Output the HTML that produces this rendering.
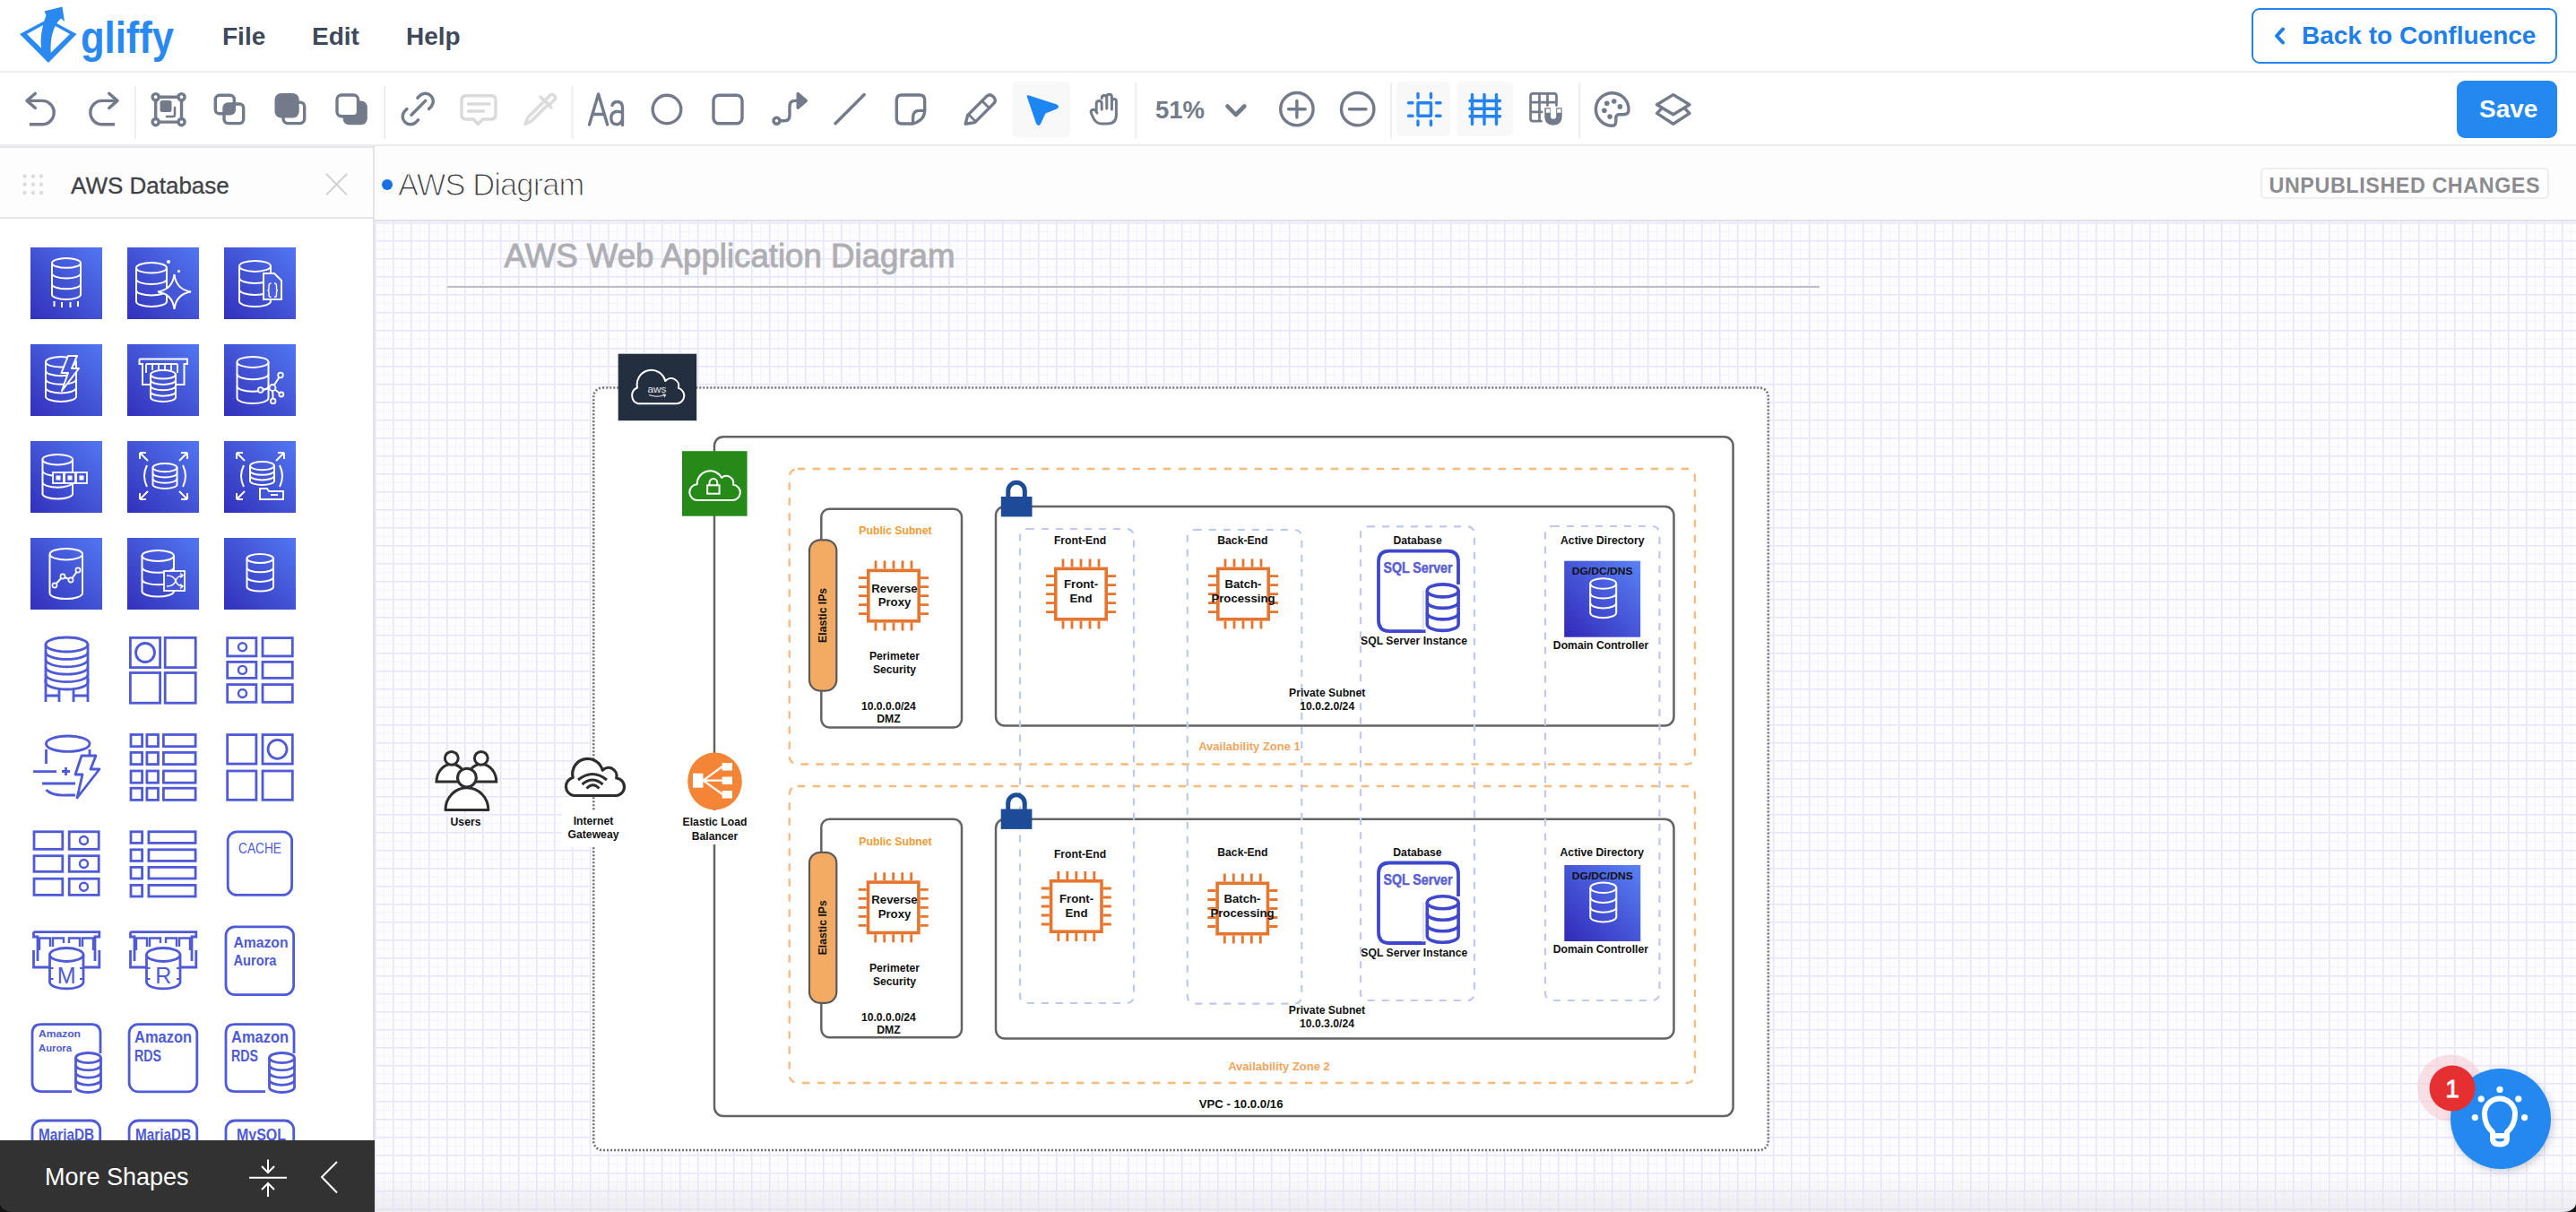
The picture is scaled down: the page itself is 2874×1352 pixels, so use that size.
<!DOCTYPE html>
<html><head><meta charset="utf-8">
<style>
*{box-sizing:border-box;margin:0;padding:0}
html,body{width:2874px;height:1352px;overflow:hidden;background:#fff;font-family:"Liberation Sans",sans-serif}
.abs{position:absolute}
#header{position:absolute;left:0;top:0;width:2874px;height:81px;background:#fff;border-bottom:2px solid #EDEDF0}
#toolbar{position:absolute;left:0;top:81px;width:2874px;height:82px;background:#fff;border-bottom:2px solid #EDEDF0}
.menu{position:absolute;font-size:28px;line-height:28px;font-weight:bold;color:#3E4A5B}
#sidebar{position:absolute;left:0;top:163px;width:418px;height:1189px;background:#fff;border-right:2px solid #E4E4E8;overflow:hidden}
#sbhead{position:absolute;left:0;top:0;width:416px;height:81px;border-top:2px solid #E6E6EA;border-bottom:2px solid #E6E6EA;background:#FDFDFE}
#footer{position:absolute;left:0;top:1272px;width:418px;height:80px;background:#323232}
#titlebar{position:absolute;left:418px;top:163px;width:2456px;height:84px;background:#FDFDFE;border-bottom:2px solid #E2E2E6}
#canvas{position:absolute;left:418px;top:247px;width:2456px;height:1105px;overflow:hidden;
 background-color:#FDFDFF;
 background-image:
  linear-gradient(to right,#E7E5FB 1px,#F1F0FD 1px,#F1F0FD 2px,transparent 2px),
  linear-gradient(to bottom,#E7E5FB 1px,#F1F0FD 1px,#F1F0FD 2px,transparent 2px),
  linear-gradient(to right,#F5F4FE 1px,transparent 1px),
  linear-gradient(to bottom,#F5F4FE 1px,transparent 1px);
 background-size:20px 20px,20px 20px,10px 10px,10px 10px;
 background-position:0px 1px,0px 1px,0px 1px,0px 1px}
.lbl{position:absolute;font-weight:bold;color:#000;text-align:center;white-space:nowrap;transform:translateX(-50%)}
svg{overflow:visible}
</style></head><body>
<!--HEADER-->
<div id="header">
 <svg class="abs" style="left:0;top:0" width="210" height="80" viewBox="0 0 210 80">
  <path fill="#2A89F1" fill-rule="evenodd" d="M22,38 L54,21 L85.5,38 L54,70 Z M30,38 L54,24.8 L78,38 L54,61.5 Z"/>
  <path fill="#2A89F1" d="M53,69 C44,60 43,40 51.5,17 L49.5,12.5 L69.5,7.5 L72,24 L68,20.5 C60,28 55,42 57,62 Z"/>
  <text x="90" y="59" font-family="Liberation Sans" font-weight="bold" font-size="50" fill="#2A89F1" textLength="104" lengthAdjust="spacingAndGlyphs">gliffy</text>
 </svg>
 <div class="menu" style="left:248px;top:26.6px">File</div>
 <div class="menu" style="left:348px;top:26.6px">Edit</div>
 <div class="menu" style="left:453px;top:26.6px">Help</div>
 <div class="abs" style="left:2512px;top:9px;width:341px;height:62px;border:2.5px solid #2384EE;border-radius:9px"></div>
 <svg class="abs" style="left:0;top:0" width="2874" height="80" viewBox="0 0 2874 80"><path d="M2547,32.5 L2540,40 L2547,47.5" fill="none" stroke="#1F7FEA" stroke-width="4" stroke-linecap="round" stroke-linejoin="round"/></svg>
 <div class="abs" style="left:2568px;top:25.8px;font-size:28px;line-height:28px;font-weight:bold;color:#1F7FEA;white-space:nowrap">Back to Confluence</div>
</div>
<!--TOOLBAR-->
<div id="toolbar">
 <div class="abs" style="left:1129px;top:10px;width:65px;height:62px;background:#F8F8F9;border-radius:6px"></div>
 <div class="abs" style="left:1558px;top:10px;width:60px;height:61px;background:#F8F8F9;border-radius:6px"></div>
 <div class="abs" style="left:1625px;top:10px;width:63px;height:61px;background:#F8F8F9;border-radius:6px"></div>
 <div class="abs" style="left:2741px;top:9px;width:112px;height:64px;background:#2388F0;border-radius:9px"></div>
 <div class="abs" style="left:2766px;top:27px;font-size:28px;line-height:28px;font-weight:bold;color:#fff">Save</div>
 <div class="abs" style="left:1289px;top:27.5px;font-size:27.5px;line-height:27.5px;font-weight:bold;color:#737A8A">51%</div>
</div>
<svg class="abs" style="left:0;top:0" width="2874" height="163" viewBox="0 0 2874 163">
 <g fill="none" stroke="#737A8A" stroke-width="3.4" stroke-linecap="round" stroke-linejoin="round">
  <!-- separators -->
  <g stroke="#EEEEF0" stroke-width="2" stroke-linecap="butt">
   <path d="M151,96 V155 M429,96 V155 M638.7,96 V155 M1267.3,92 V155 M1552,92 V155 M1762,92 V155"/>
  </g>
  <!-- undo -->
  <path d="M39.4,104.3 L30,112.4 L39.4,120.5"/>
  <path d="M30,112.4 H47 A13.2,13.2 0 0 1 47,138.8 H33" stroke-linecap="butt"/>
  <!-- redo -->
  <path d="M121.7,104.3 L131,112.4 L121.7,120.5"/>
  <path d="M131,112.4 H114 A13.2,13.2 0 0 0 114,138.8 H128" stroke-linecap="butt"/>
  <!-- select group -->
  <circle cx="173.7" cy="108.2" r="3.6"/><circle cx="202.5" cy="108.2" r="3.6"/>
  <circle cx="173.7" cy="136.1" r="3.6"/><circle cx="202.5" cy="136.1" r="3.6"/>
  <path d="M177.3,108.2 H198.9 M177.3,136.1 H198.9 M173.7,111.8 V132.5 M202.5,111.8 V132.5"/>
  <rect x="178.5" y="112" width="13" height="13" rx="2.5" fill="#737A8A" stroke="none"/>
  <path d="M195,120 V128 Q195,130 193,130 H186" stroke-width="2.6"/>
  <!-- duplicate -->
  <rect x="240.3" y="106.3" width="21" height="20.5" rx="4.5"/>
  <rect x="250" y="116" width="21.7" height="21.6" rx="4.5"/>
  <rect x="250" y="116" width="11.3" height="10.8" fill="#737A8A" stroke="none"/>
  <!-- bring front -->
  <rect x="316" y="114.1" width="23.7" height="23.5" rx="5"/>
  <rect x="306.5" y="104" width="27.2" height="27.5" rx="7" fill="#737A8A" stroke="none"/>
  <!-- send back -->
  <rect x="382.6" y="112.4" width="27.2" height="26.9" rx="7" fill="#737A8A" stroke="none"/>
  <rect x="376" y="106" width="23.5" height="23.8" rx="5" fill="#fff"/>
  <!-- link -->
  <path d="M459,128.2 L474.7,112.4"/>
  <path d="M465.9,109.2 L468.7,106.4 A8.8,8.8 0 0 1 481.3,118.6 L478.5,121.5"/>
  <path d="M454,121.5 L451.2,124.4 A8.8,8.8 0 0 0 463.8,136.6 L466.6,133.8"/>
  <!-- comment disabled -->
  <g stroke="#DADADC">
   <path d="M520,106.8 H548 Q553,106.8 553,111.8 V128 Q553,133 548,133 H538.5 L533.4,138.5 L528.3,133 H520 Q515,133 515,128 V111.8 Q515,106.8 520,106.8 Z"/>
   <path d="M522.5,116 H546 M522.5,124 H539.5"/>
  </g>
  <!-- eyedropper disabled -->
  <g stroke="#DCDCDE">
   <path d="M586,138.5 L589,131 L608,112 L612,116 L593,135 Z"/>
   <path d="M603,108 L615,120 M608,112 L613.5,106.5 Q616,104 618.5,106.5 Q621,109 618.5,111.5 L612,118"/>
  </g>
  <!-- Aa -->
  <path d="M657.5,139 L667.6,105 L677.7,139 M661.3,127.5 H674"/>
  <path d="M683,117.5 Q684.5,113.5 688.5,113.5 Q694.5,113.5 694.5,120 V139.5 M694.5,126 Q691,124 687.5,124.5 Q681.8,125.5 681.8,131.5 Q681.8,138.7 688,138.7 Q692.5,138.7 694.5,133"/>
  <!-- circle -->
  <circle cx="744" cy="122" r="15.8"/>
  <!-- rect -->
  <rect x="796" y="106.2" width="32" height="31.6" rx="6"/>
  <!-- connector -->
  <circle cx="866.5" cy="134.7" r="3.5"/>
  <path d="M870,134.7 H875 Q881,134.7 881,128.7 V118.4 Q881,112.4 887,112.4 H891"/>
  <path d="M890.2,104.5 L899.3,112.4 L890.2,120.2 Z" fill="#737A8A"/>
  <!-- line -->
  <path d="M932,137.8 L964.2,105.5"/>
  <!-- note -->
  <path d="M1018.4,138 H1006 Q1000.3,138 1000.3,132.3 V111.7 Q1000.3,106 1006,106 H1026 Q1031.7,106 1031.7,111.7 V123.2 Q1031.7,131 1025,135 Q1022,137.5 1018.4,138 Z"/>
  <path d="M1018.6,137.5 V131 Q1018.6,123.4 1026,123.4 H1031.5"/>
  <!-- pencil -->
  <path d="M1077.2,138.2 L1079.6,128.6 L1100.3,107.9 Q1104.3,103.9 1108.3,107.9 Q1112.3,111.9 1108.3,115.9 L1087.6,136.6 Z"/>
  <path d="M1095.6,112.6 L1103.6,120.6 M1080.5,127.5 L1088.5,135.5" stroke-width="2.8"/>
  <!-- pointer -->
  <path d="M1147,107.5 L1178.7,117.8 Q1181,119 1178.5,120.3 L1165.5,125.5 L1160,137.5 Q1158.7,140 1157.3,137.5 Z" fill="#1E86F0" stroke="#1E86F0" stroke-width="2.5"/>
  <!-- hand -->
  <path d="M1223.2,123 V115.5 Q1223.2,112.5 1226.2,112.5 Q1229.2,112.5 1229.2,115.5 V122 M1229.2,109.5 Q1229.2,106.5 1232,106.5 Q1234.8,106.5 1234.8,109.5 V121 M1234.8,108 Q1234.8,105.2 1237.6,105.2 Q1240.4,105.2 1240.4,108 V122 M1240.4,113 Q1240.4,110.5 1242.9,110.5 Q1245.4,110.5 1245.4,113 V128 Q1245.4,138 1235.5,138 H1229 Q1222.5,138 1219.5,131 L1217.5,126.5 Q1216.3,123.5 1218.8,122.5 Q1221.3,121.5 1223.2,124.5 L1224,126" stroke-width="3"/>
  <!-- chevron -->
  <path d="M1369.5,118.5 L1378.8,128 L1388.3,118.5" stroke-width="4.6"/>
  <!-- zoom in/out -->
  <circle cx="1446.9" cy="121.7" r="18.2"/>
  <path d="M1446.9,112.5 V131 M1437.6,121.7 H1456.2"/>
  <circle cx="1514.7" cy="121.7" r="18.2"/>
  <path d="M1505.4,121.7 H1524"/>
  <!-- snap blue -->
  <g stroke="#2384F0">
   <rect x="1582" y="114.8" width="14.5" height="14.5" rx="0.5"/>
   <path d="M1571.5,114.8 H1576 M1602.5,114.8 H1607 M1571.5,129.3 H1576 M1602.5,129.3 H1607 M1582,104.5 V109 M1596.5,104.5 V109 M1582,135 V139.5 M1596.5,135 V139.5"/>
  </g>
  <!-- grid blue -->
  <path stroke="#2384F0" d="M1642.5,105.5 V138.5 M1656,105.5 V138.5 M1669.5,105.5 V138.5 M1640,112.5 H1673.5 M1640,121.2 H1673.5 M1640,129.8 H1673.5"/>
  <!-- grid magnet -->
  <path d="M1719.5,135.2 H1710.2 Q1707.6,135.2 1707.6,132.6 V107 Q1707.6,104.4 1710.2,104.4 H1733.9 Q1736.5,104.4 1736.5,107 V117.6 M1707.6,114.2 H1736.5 M1707.6,124.9 H1720.2 M1717.5,104.4 V135.2 M1726.5,104.4 V117.6" stroke-width="2.7"/>
  <path d="M1723.3,120.2 H1730 V129.5 Q1730,132.8 1733,132.8 Q1736.2,132.8 1736.2,129.5 V120.2 H1742.7 V130 Q1742.7,139.7 1733,139.7 Q1723.3,139.7 1723.3,130 Z" fill="#737A8A" stroke="none"/>
  <rect x="1724.8" y="121.5" width="4.6" height="4.2" fill="#fff" stroke="none"/>
  <rect x="1737.2" y="121.5" width="4.4" height="4.2" fill="#fff" stroke="none"/>
  <!-- palette -->
  <path d="M1799,140.3 A18.3,18.3 0 1 1 1817,123 Q1817,127.5 1811,127.8 H1806.5 Q1802.5,128 1802.8,132.5 Q1803.2,136.5 1802.2,138.5 Q1801,140.3 1799,140.3 Z"/>
  <circle cx="1792.8" cy="115.3" r="2.8" fill="#737A8A" stroke="none"/>
  <circle cx="1800.8" cy="113" r="2.8" fill="#737A8A" stroke="none"/>
  <circle cx="1807.4" cy="118.9" r="2.8" fill="#737A8A" stroke="none"/>
  <circle cx="1789.9" cy="123.3" r="2.8" fill="#737A8A" stroke="none"/>
  <circle cx="1796.1" cy="130.1" r="2.8" fill="#737A8A" stroke="none"/>
  <!-- layers -->
  <path d="M1866.8,105.6 L1885,116.7 L1866.8,127.8 L1848.6,116.7 Z"/>
  <path d="M1854.5,120.4 L1848.6,126.4 L1866.8,138.2 L1885,126.4 L1879.1,120.4"/>
 </g>
</svg>
<!--SIDEBAR-->
<div id="sidebar">
 <div id="sbhead"></div>
 <svg class="abs" style="left:0;top:-163px" width="418" height="1352" viewBox="0 0 418 1352">
  <g fill="#DDDDDF">
   <circle cx="27.6" cy="196.5" r="2.2"/><circle cx="36.9" cy="196.5" r="2.2"/><circle cx="46" cy="196.5" r="2.2"/>
   <circle cx="27.6" cy="205.8" r="2.2"/><circle cx="36.9" cy="205.8" r="2.2"/><circle cx="46" cy="205.8" r="2.2"/>
   <circle cx="27.6" cy="215" r="2.2"/><circle cx="36.9" cy="215" r="2.2"/><circle cx="46" cy="215" r="2.2"/>
  </g>
  <path d="M364,194 L387,217.3 M387,194 L364,217.3" stroke="#CFCFD2" stroke-width="1.8"/>
 </svg>
 <div class="abs" style="left:79px;top:31px;font-size:26px;line-height:26px;color:#404247;-webkit-text-stroke:0.3px #404247;white-space:nowrap">AWS Database</div>
 <div class="abs" style="left:0;top:-163px;width:418px;height:1352px"><svg class="abs" style="left:0;top:0" width="418" height="1352" viewBox="0 0 418 1352">
<defs>
 <linearGradient id="awsg" x1="0" y1="1" x2="1" y2="0">
  <stop offset="0" stop-color="#3230BA"/><stop offset="1" stop-color="#5277F0"/>
 </linearGradient>
</defs>
<rect x="34" y="276" width="80" height="80" fill="url(#awsg)"/>
<path d="M58.0,293.4 V328.6 A16.0,5.4 0 0 0 90.0,328.6 V293.4" fill="none" stroke="#fff" stroke-width="2"/>
<ellipse cx="74.0" cy="293.4" rx="16.0" ry="5.4" fill="none" stroke="#fff" stroke-width="2"/>
<path d="M58.0,305.1 A16.0,5.4 0 0 0 90.0,305.1 M58.0,316.9 A16.0,5.4 0 0 0 90.0,316.9 " fill="none" stroke="#fff" stroke-width="2"/>
<path d="M60.5,336 V342 M69,337 V343 M78.5,337 V343 M87,336 V342" stroke="#fff" stroke-width="2"/>
<rect x="142" y="276" width="80" height="80" fill="url(#awsg)"/>
<path d="M152.0,298.8 V336.2 A17.0,5.8 0 0 0 186.0,336.2 V298.8" fill="none" stroke="#fff" stroke-width="2"/>
<ellipse cx="169.0" cy="298.8" rx="17.0" ry="5.8" fill="none" stroke="#fff" stroke-width="2"/>
<path d="M152.0,311.3 A17.0,5.8 0 0 0 186.0,311.3 M152.0,323.7 A17.0,5.8 0 0 0 186.0,323.7 " fill="none" stroke="#fff" stroke-width="2"/>
<path d="M194.5,306 Q196.5,323 213,325.5 Q196.5,328 194.5,345 Q192.5,328 176,325.5 Q192.5,323 194.5,306 Z" fill="#4556D6" stroke="#fff" stroke-width="2"/>
<circle cx="188" cy="292" r="2" fill="#fff"/><circle cx="199.5" cy="302.5" r="1.6" fill="#fff"/>
<rect x="250" y="276" width="80" height="80" fill="url(#awsg)"/>
<path d="M267.0,296.9 V336.1 A17.5,6.0 0 0 0 302.0,336.1 V296.9" fill="none" stroke="#fff" stroke-width="2"/>
<ellipse cx="284.5" cy="296.9" rx="17.5" ry="6.0" fill="none" stroke="#fff" stroke-width="2"/>
<path d="M267.0,310.0 A17.5,6.0 0 0 0 302.0,310.0 M267.0,323.0 A17.5,6.0 0 0 0 302.0,323.0 " fill="none" stroke="#fff" stroke-width="2"/>
<path d="M294,305 H306 L314,313 V334 H294 Z" fill="#4A5FE0" stroke="#fff" stroke-width="2"/>
<path d="M302.5,316 Q300,316 300,319 V322 Q300,324 298.5,324 Q300,324 300,326 V329 Q300,331.5 302.5,331.5 M306,316 Q308.5,316 308.5,319 V322 Q308.5,324 310,324 Q308.5,324 308.5,326 V329 Q308.5,331.5 306,331.5" fill="none" stroke="#fff" stroke-width="1.4"/>
<rect x="34" y="384" width="80" height="80" fill="url(#awsg)"/>
<path d="M51.0,403.8 V442.2 A17.0,5.8 0 0 0 85.0,442.2 V403.8" fill="none" stroke="#fff" stroke-width="2"/>
<ellipse cx="68.0" cy="403.8" rx="17.0" ry="5.8" fill="none" stroke="#fff" stroke-width="2"/>
<path d="M51.0,413.4 A17.0,5.8 0 0 0 85.0,413.4 M51.0,423.0 A17.0,5.8 0 0 0 85.0,423.0 M51.0,432.6 A17.0,5.8 0 0 0 85.0,432.6 " fill="none" stroke="#fff" stroke-width="2"/>
<path d="M76,397 L68.5,416 H76 L69,436 L88,411 H80 L86,397 Z" fill="#4458D8" stroke="#fff" stroke-width="2" stroke-linejoin="round"/>
<rect x="142" y="384" width="80" height="80" fill="url(#awsg)"/>
<path d="M155.5,400.5 H209 V406 H205.5 V429 H197 M155.5,400.5 V406 H159 V429 H167" fill="none" stroke="#fff" stroke-width="2"/>
<path d="M163,406 V416 M170,406 V413 M177,406 V412 M184,406 V412 M191,406 V413 M198,406 V416 M163,406 H198" fill="none" stroke="#fff" stroke-width="1.8"/>
<path d="M168.0,417.8 V443.2 A14.0,4.8 0 0 0 196.0,443.2 V417.8" fill="#4453D4" stroke="#fff" stroke-width="2"/>
<ellipse cx="182.0" cy="417.8" rx="14.0" ry="4.8" fill="#4453D4" stroke="#fff" stroke-width="2"/>
<path d="M168.0,424.1 A14.0,4.8 0 0 0 196.0,424.1 M168.0,430.5 A14.0,4.8 0 0 0 196.0,430.5 M168.0,436.9 A14.0,4.8 0 0 0 196.0,436.9 " fill="none" stroke="#fff" stroke-width="2"/>
<rect x="250" y="384" width="80" height="80" fill="url(#awsg)"/>
<path d="M264.5,403.9 V444.1 A17.5,6.0 0 0 0 299.5,444.1 V403.9" fill="none" stroke="#fff" stroke-width="2"/>
<ellipse cx="282.0" cy="403.9" rx="17.5" ry="6.0" fill="none" stroke="#fff" stroke-width="2"/>
<path d="M264.5,417.3 A17.5,6.0 0 0 0 299.5,417.3 M264.5,430.7 A17.5,6.0 0 0 0 299.5,430.7 " fill="none" stroke="#fff" stroke-width="2"/>
<path d="M304,432.5 L313,418.5 M304,432.5 L290.7,435 M304,432.5 L313.8,440 M304,432.5 L304.7,447.4" stroke="#fff" stroke-width="2"/>
<circle cx="304" cy="432.5" r="3.5" fill="#4A5FE0" stroke="#fff" stroke-width="1.8"/>
<circle cx="313" cy="418.5" r="2.8" fill="#4A5FE0" stroke="#fff" stroke-width="1.8"/>
<circle cx="290.7" cy="435" r="2.8" fill="#4A5FE0" stroke="#fff" stroke-width="1.8"/>
<circle cx="313.8" cy="440" r="2.5" fill="#4A5FE0" stroke="#fff" stroke-width="1.8"/>
<circle cx="304.7" cy="447.4" r="2.8" fill="#4A5FE0" stroke="#fff" stroke-width="1.8"/>
<rect x="34" y="492" width="80" height="80" fill="url(#awsg)"/>
<path d="M47.5,512.7 V551.3 A16.8,5.7 0 0 0 81.0,551.3 V512.7" fill="none" stroke="#fff" stroke-width="2"/>
<ellipse cx="64.2" cy="512.7" rx="16.8" ry="5.7" fill="none" stroke="#fff" stroke-width="2"/>
<path d="M47.5,525.6 A16.8,5.7 0 0 0 81.0,525.6 M47.5,538.4 A16.8,5.7 0 0 0 81.0,538.4 " fill="none" stroke="#fff" stroke-width="2"/>
<rect x="59" y="527" width="12" height="12" fill="#4656D8" stroke="#fff" stroke-width="1.8"/><rect x="62.5" y="530.5" width="5" height="5" fill="#fff"/>
<rect x="72" y="527" width="12" height="12" fill="#4656D8" stroke="#fff" stroke-width="1.8"/><rect x="75.5" y="530.5" width="5" height="5" fill="#fff"/>
<rect x="85" y="527" width="12" height="12" fill="#4656D8" stroke="#fff" stroke-width="1.8"/><rect x="88.5" y="530.5" width="5" height="5" fill="#fff"/>
<rect x="142" y="492" width="80" height="80" fill="url(#awsg)"/>
<path d="M170.5,521.6 V540.4 A13.5,4.6 0 0 0 197.5,540.4 V521.6" fill="none" stroke="#fff" stroke-width="2"/>
<ellipse cx="184.0" cy="521.6" rx="13.5" ry="4.6" fill="none" stroke="#fff" stroke-width="2"/>
<path d="M170.5,527.9 A13.5,4.6 0 0 0 197.5,527.9 M170.5,534.1 A13.5,4.6 0 0 0 197.5,534.1 " fill="none" stroke="#fff" stroke-width="2"/>
<path d="M164,519 Q158,531 164,543 M204,519 Q210,531 204,543" fill="none" stroke="#fff" stroke-width="2"/>
<path d="M156,505 L165,514 M156,505 V512 M156,505 H163 M209,505 L200,514 M209,505 V512 M209,505 H202 M156,557 L165,548 M156,557 V550 M156,557 H163 M209,557 L200,548 M209,557 V550 M209,557 H202" fill="none" stroke="#fff" stroke-width="2"/>
<rect x="250" y="492" width="80" height="80" fill="url(#awsg)"/>
<path d="M279.0,519.6 V536.4 A13.5,4.6 0 0 0 306.0,536.4 V519.6" fill="none" stroke="#fff" stroke-width="2"/>
<ellipse cx="292.5" cy="519.6" rx="13.5" ry="4.6" fill="none" stroke="#fff" stroke-width="2"/>
<path d="M279.0,525.2 A13.5,4.6 0 0 0 306.0,525.2 M279.0,530.8 A13.5,4.6 0 0 0 306.0,530.8 " fill="none" stroke="#fff" stroke-width="2"/>
<path d="M272,519 Q266,531 272,543 M312,519 Q318,531 312,543" fill="none" stroke="#fff" stroke-width="2"/>
<path d="M264,505 L273,514 M264,505 V512 M264,505 H271 M317,505 L308,514 M317,505 V512 M317,505 H310 M264,557 L273,548 M264,557 V550 M264,557 H271 " fill="none" stroke="#fff" stroke-width="2"/>
<path d="M290,557 V545 H298 L300,548 H316 V557 Z M302,552 H310" fill="#4456D8" stroke="#fff" stroke-width="2"/>
<rect x="34" y="600" width="80" height="80" fill="url(#awsg)"/>
<path d="M55.5,618.2 V661.8 A18.2,6.2 0 0 0 92.0,661.8 V618.2" fill="none" stroke="#fff" stroke-width="2"/>
<ellipse cx="73.8" cy="618.2" rx="18.2" ry="6.2" fill="none" stroke="#fff" stroke-width="2"/>
<path d="M61,653 L70,643 L79,647 L87,636" fill="none" stroke="#fff" stroke-width="2"/>
<circle cx="61" cy="653" r="2.6" fill="#4456D8" stroke="#fff" stroke-width="1.6"/>
<circle cx="70" cy="643" r="2.6" fill="#4456D8" stroke="#fff" stroke-width="1.6"/>
<circle cx="79" cy="647" r="2.6" fill="#4456D8" stroke="#fff" stroke-width="1.6"/>
<circle cx="87" cy="636" r="2.6" fill="#4456D8" stroke="#fff" stroke-width="1.6"/>
<rect x="142" y="600" width="80" height="80" fill="url(#awsg)"/>
<path d="M158.5,620.0 V660.0 A17.8,6.0 0 0 0 194.0,660.0 V620.0" fill="none" stroke="#fff" stroke-width="2"/>
<ellipse cx="176.2" cy="620.0" rx="17.8" ry="6.0" fill="none" stroke="#fff" stroke-width="2"/>
<path d="M158.5,633.3 A17.8,6.0 0 0 0 194.0,633.3 M158.5,646.7 A17.8,6.0 0 0 0 194.0,646.7 " fill="none" stroke="#fff" stroke-width="2"/>
<rect x="183" y="637" width="23" height="22" fill="#4658DA" stroke="#fff" stroke-width="1.8"/><path d="M186,642 Q194,642 196,648 Q198,654 204,654 M186,654 Q194,654 196,648 Q198,642 204,642 M201,639.5 L204,642 L201,644.5 M201,651.5 L204,654 L201,656.5" fill="none" stroke="#fff" stroke-width="1.5"/>
<rect x="250" y="600" width="80" height="80" fill="url(#awsg)"/>
<path d="M275.5,623.0 V655.0 A14.8,5.0 0 0 0 305.0,655.0 V623.0" fill="none" stroke="#fff" stroke-width="2"/>
<ellipse cx="290.2" cy="623.0" rx="14.8" ry="5.0" fill="none" stroke="#fff" stroke-width="2"/>
<path d="M275.5,633.7 A14.8,5.0 0 0 0 305.0,633.7 M275.5,644.3 A14.8,5.0 0 0 0 305.0,644.3 " fill="none" stroke="#fff" stroke-width="2"/>
<path d="M51.0,719.0 V761.0 A23.5,8.0 0 0 0 98.0,761.0 V719.0" fill="none" stroke="#4F5AD6" stroke-width="2.8"/>
<ellipse cx="74.5" cy="719.0" rx="23.5" ry="8.0" fill="none" stroke="#4F5AD6" stroke-width="2.8"/>
<path d="M51.0,727.4 A23.5,8.0 0 0 0 98.0,727.4 M51.0,735.8 A23.5,8.0 0 0 0 98.0,735.8 M51.0,744.2 A23.5,8.0 0 0 0 98.0,744.2 M51.0,752.6 A23.5,8.0 0 0 0 98.0,752.6 " fill="none" stroke="#4F5AD6" stroke-width="2.8"/>
<path d="M51,757 V783 M98,757 V783 M66,768 V783 M82,768 V783 M51,776 H66 M82,776 H98" fill="none" stroke="#4F5AD6" stroke-width="2.8"/>
<rect x="145.4" y="711.4" width="33.2" height="33.2" rx="0" fill="none" stroke="#4F5AD6" stroke-width="2.8"/><rect x="184.2" y="711.4" width="34" height="33.2" rx="0" fill="none" stroke="#4F5AD6" stroke-width="2.8"/><rect x="145.4" y="750.5" width="33.2" height="33.7" rx="0" fill="none" stroke="#4F5AD6" stroke-width="2.8"/><rect x="184.2" y="750.5" width="34" height="33.7" rx="0" fill="none" stroke="#4F5AD6" stroke-width="2.8"/>
<circle cx="162" cy="728" r="10.5" fill="none" stroke="#4F5AD6" stroke-width="2.8"/>
<rect x="253.7" y="711.6" width="32.2" height="20.3" rx="0" fill="none" stroke="#4F5AD6" stroke-width="2.8"/><rect x="293" y="711.6" width="33.3" height="20.3" rx="0" fill="none" stroke="#4F5AD6" stroke-width="2.8"/>
<circle cx="270.5" cy="721.8" r="4.5" fill="none" stroke="#4F5AD6" stroke-width="2.4"/>
<rect x="253.7" y="738.4" width="32.2" height="18" rx="0" fill="none" stroke="#4F5AD6" stroke-width="2.8"/><rect x="293" y="738.4" width="33.3" height="18" rx="0" fill="none" stroke="#4F5AD6" stroke-width="2.8"/>
<circle cx="270.5" cy="747.4" r="4.5" fill="none" stroke="#4F5AD6" stroke-width="2.4"/>
<rect x="253.7" y="763.6" width="32.2" height="19.7" rx="0" fill="none" stroke="#4F5AD6" stroke-width="2.8"/><rect x="293" y="763.6" width="33.3" height="19.7" rx="0" fill="none" stroke="#4F5AD6" stroke-width="2.8"/>
<circle cx="270.5" cy="773.5" r="4.5" fill="none" stroke="#4F5AD6" stroke-width="2.4"/>
<path d="M51.5,836 V852 M100,836 V846" fill="none" stroke="#4F5AD6" stroke-width="2.8"/>
<ellipse cx="75.7" cy="829.7" rx="24.3" ry="8.7" fill="none" stroke="#4F5AD6" stroke-width="2.8"/>
<path d="M37,860.7 H63 M47,874 H84 M51.5,881 Q58,888 75,887 H84 M69,860.5 H78 M73.5,856 V865" fill="none" stroke="#4F5AD6" stroke-width="2.8"/>
<path d="M91,843 L84,864 H92 L86,890 L111,858 H101 L107,843 Z" fill="#fff" stroke="#4F5AD6" stroke-width="2.8" stroke-linejoin="round"/>
<rect x="146" y="819.5" width="12.6" height="13.2" rx="0" fill="none" stroke="#4F5AD6" stroke-width="2.8"/><rect x="163.9" y="819.5" width="12.6" height="13.2" rx="0" fill="none" stroke="#4F5AD6" stroke-width="2.8"/><rect x="182.4" y="819.5" width="35.7" height="13.2" rx="0" fill="none" stroke="#4F5AD6" stroke-width="2.8"/>
<rect x="146" y="839.4" width="12.6" height="13.2" rx="0" fill="none" stroke="#4F5AD6" stroke-width="2.8"/><rect x="163.9" y="839.4" width="12.6" height="13.2" rx="0" fill="none" stroke="#4F5AD6" stroke-width="2.8"/><rect x="182.4" y="839.4" width="35.7" height="13.2" rx="0" fill="none" stroke="#4F5AD6" stroke-width="2.8"/>
<rect x="146" y="860" width="12.6" height="13.2" rx="0" fill="none" stroke="#4F5AD6" stroke-width="2.8"/><rect x="163.9" y="860" width="12.6" height="13.2" rx="0" fill="none" stroke="#4F5AD6" stroke-width="2.8"/><rect x="182.4" y="860" width="35.7" height="13.2" rx="0" fill="none" stroke="#4F5AD6" stroke-width="2.8"/>
<rect x="146" y="879.2" width="12.6" height="13.2" rx="0" fill="none" stroke="#4F5AD6" stroke-width="2.8"/><rect x="163.9" y="879.2" width="12.6" height="13.2" rx="0" fill="none" stroke="#4F5AD6" stroke-width="2.8"/><rect x="182.4" y="879.2" width="35.7" height="13.2" rx="0" fill="none" stroke="#4F5AD6" stroke-width="2.8"/>
<rect x="253.7" y="819.6" width="32.2" height="32.5" rx="0" fill="none" stroke="#4F5AD6" stroke-width="2.8"/><rect x="293" y="819.6" width="33.3" height="32.5" rx="0" fill="none" stroke="#4F5AD6" stroke-width="2.8"/><rect x="253.7" y="860" width="32.2" height="32.3" rx="0" fill="none" stroke="#4F5AD6" stroke-width="2.8"/><rect x="293" y="860" width="33.3" height="32.3" rx="0" fill="none" stroke="#4F5AD6" stroke-width="2.8"/>
<circle cx="309.5" cy="835.8" r="10.5" fill="none" stroke="#4F5AD6" stroke-width="2.8"/>
<rect x="38" y="927.8" width="31.8" height="19.5" rx="0" fill="none" stroke="#4F5AD6" stroke-width="2.8"/><rect x="77.2" y="927.8" width="33" height="19.5" rx="0" fill="none" stroke="#4F5AD6" stroke-width="2.8"/>
<circle cx="93.5" cy="937.5" r="4.5" fill="none" stroke="#4F5AD6" stroke-width="2.4"/>
<rect x="38" y="954.7" width="31.8" height="17.6" rx="0" fill="none" stroke="#4F5AD6" stroke-width="2.8"/><rect x="77.2" y="954.7" width="33" height="17.6" rx="0" fill="none" stroke="#4F5AD6" stroke-width="2.8"/>
<circle cx="93.5" cy="963.5" r="4.5" fill="none" stroke="#4F5AD6" stroke-width="2.4"/>
<rect x="38" y="980.2" width="31.8" height="18.2" rx="0" fill="none" stroke="#4F5AD6" stroke-width="2.8"/><rect x="77.2" y="980.2" width="33" height="18.2" rx="0" fill="none" stroke="#4F5AD6" stroke-width="2.8"/>
<circle cx="93.5" cy="989.3" r="4.5" fill="none" stroke="#4F5AD6" stroke-width="2.4"/>
<rect x="146" y="927.8" width="12.6" height="12.6" rx="0" fill="none" stroke="#4F5AD6" stroke-width="2.8"/><rect x="165.9" y="927.8" width="52.2" height="12.6" rx="0" fill="none" stroke="#4F5AD6" stroke-width="2.8"/>
<rect x="146" y="947.8" width="12.6" height="12.6" rx="0" fill="none" stroke="#4F5AD6" stroke-width="2.8"/><rect x="165.9" y="947.8" width="52.2" height="12.6" rx="0" fill="none" stroke="#4F5AD6" stroke-width="2.8"/>
<rect x="146" y="967.4" width="12.6" height="12.6" rx="0" fill="none" stroke="#4F5AD6" stroke-width="2.8"/><rect x="165.9" y="967.4" width="52.2" height="12.6" rx="0" fill="none" stroke="#4F5AD6" stroke-width="2.8"/>
<rect x="146" y="987.4" width="12.6" height="12.6" rx="0" fill="none" stroke="#4F5AD6" stroke-width="2.8"/><rect x="165.9" y="987.4" width="52.2" height="12.6" rx="0" fill="none" stroke="#4F5AD6" stroke-width="2.8"/>
<rect x="254.2" y="927.8" width="71.4" height="70.6" rx="10" fill="none" stroke="#4F5AD6" stroke-width="2.8"/>
<text x="290" y="952" text-anchor="middle" font-family="Liberation Sans" font-size="17" fill="#4F5AD6" textLength="48" lengthAdjust="spacingAndGlyphs">CACHE</text>
<path d="M37.5,1039.6 H110.8 V1045 H106 V1072 M37.5,1039.6 V1045 H42 V1072 M37.5,1060 V1079 H55 M110.8,1060 V1079 H93" fill="none" stroke="#4F5AD6" stroke-width="2.8"/>
<path d="M44,1060 V1046.5 H56 V1056 M59,1056 V1046.5 H71 V1052 M77,1052 V1046.5 H89 V1056 M92,1056 V1046.5 H104 V1060" fill="none" stroke="#4F5AD6" stroke-width="2.4"/>
<path d="M55.5,1065.0 V1096.0 A18.8,7.5 0 0 0 93.0,1096.0 V1065.0" fill="#fff" stroke="#4F5AD6" stroke-width="2.8"/>
<ellipse cx="74.2" cy="1065.0" rx="18.8" ry="7.5" fill="#fff" stroke="#4F5AD6" stroke-width="2.8"/>
<path d="M55.5,1080 h4 M89,1080 h4 M55.5,1092 h4 M89,1092 h4" stroke="#4F5AD6" stroke-width="2.2"/>
<text x="74.2" y="1097" text-anchor="middle" font-family="Liberation Sans" font-size="25" fill="#4F5AD6">M</text>
<path d="M145.5,1039.6 H218.8 V1045 H214 V1072 M145.5,1039.6 V1045 H150 V1072 M145.5,1060 V1079 H163 M218.8,1060 V1079 H201" fill="none" stroke="#4F5AD6" stroke-width="2.8"/>
<path d="M152,1060 V1046.5 H164 V1056 M167,1056 V1046.5 H179 V1052 M185,1052 V1046.5 H197 V1056 M200,1056 V1046.5 H212 V1060" fill="none" stroke="#4F5AD6" stroke-width="2.4"/>
<path d="M163.5,1065.0 V1096.0 A18.8,7.5 0 0 0 201.0,1096.0 V1065.0" fill="#fff" stroke="#4F5AD6" stroke-width="2.8"/>
<ellipse cx="182.2" cy="1065.0" rx="18.8" ry="7.5" fill="#fff" stroke="#4F5AD6" stroke-width="2.8"/>
<path d="M163.5,1080 h4 M197,1080 h4 M163.5,1092 h4 M197,1092 h4" stroke="#4F5AD6" stroke-width="2.2"/>
<text x="182.2" y="1097" text-anchor="middle" font-family="Liberation Sans" font-size="25" fill="#4F5AD6">R</text>
<rect x="252" y="1033.8" width="75.6" height="75.8" rx="10" fill="none" stroke="#4F5AD6" stroke-width="2.8"/>
<text x="260.5" y="1056.5" font-family="Liberation Sans" font-weight="bold" font-size="17" fill="#4F5AD6" textLength="61" lengthAdjust="spacingAndGlyphs">Amazon</text><text x="260.5" y="1077.0" font-family="Liberation Sans" font-weight="bold" font-size="17" fill="#4F5AD6" textLength="48" lengthAdjust="spacingAndGlyphs">Aurora</text>
<path d="M80,1217.6 H46 Q36,1217.6 36,1207.6 V1152.6 Q36,1142.6 46,1142.6 H102 Q112,1142.6 112,1152.6 V1175" fill="none" stroke="#4F5AD6" stroke-width="2.8"/>
<path d="M84.5,1180.1 V1212.9 A14.0,5.6 0 0 0 112.5,1212.9 V1180.1" fill="#fff" stroke="#4F5AD6" stroke-width="2.8"/>
<ellipse cx="98.5" cy="1180.1" rx="14.0" ry="5.6" fill="#fff" stroke="#4F5AD6" stroke-width="2.8"/>
<path d="M84.5,1188.3 A14.0,5.6 0 0 0 112.5,1188.3 M84.5,1196.5 A14.0,5.6 0 0 0 112.5,1196.5 M84.5,1204.7 A14.0,5.6 0 0 0 112.5,1204.7 " fill="none" stroke="#4F5AD6" stroke-width="2.8"/>
<text x="43" y="1157.0" font-family="Liberation Sans" font-weight="bold" font-size="11.5" fill="#4F5AD6" textLength="47" lengthAdjust="spacingAndGlyphs">Amazon</text><text x="43" y="1172.8" font-family="Liberation Sans" font-weight="bold" font-size="11.5" fill="#4F5AD6" textLength="37" lengthAdjust="spacingAndGlyphs">Aurora</text>
<rect x="144.1" y="1142.6" width="75.7" height="75.2" rx="10" fill="none" stroke="#4F5AD6" stroke-width="2.8"/>
<text x="150" y="1163.3" font-family="Liberation Sans" font-weight="bold" font-size="17.5" fill="#4F5AD6" textLength="64" lengthAdjust="spacingAndGlyphs">Amazon</text><text x="150" y="1184.0" font-family="Liberation Sans" font-weight="bold" font-size="17.5" fill="#4F5AD6" textLength="30" lengthAdjust="spacingAndGlyphs">RDS</text>
<path d="M296,1217.6 H262 Q252,1217.6 252,1207.6 V1152.6 Q252,1142.6 262,1142.6 H318 Q328,1142.6 328,1152.6 V1175" fill="none" stroke="#4F5AD6" stroke-width="2.8"/>
<path d="M300.5,1180.1 V1212.9 A14.0,5.6 0 0 0 328.5,1212.9 V1180.1" fill="#fff" stroke="#4F5AD6" stroke-width="2.8"/>
<ellipse cx="314.5" cy="1180.1" rx="14.0" ry="5.6" fill="#fff" stroke="#4F5AD6" stroke-width="2.8"/>
<path d="M300.5,1188.3 A14.0,5.6 0 0 0 328.5,1188.3 M300.5,1196.5 A14.0,5.6 0 0 0 328.5,1196.5 M300.5,1204.7 A14.0,5.6 0 0 0 328.5,1204.7 " fill="none" stroke="#4F5AD6" stroke-width="2.8"/>
<text x="258" y="1163.3" font-family="Liberation Sans" font-weight="bold" font-size="17.5" fill="#4F5AD6" textLength="64" lengthAdjust="spacingAndGlyphs">Amazon</text><text x="258" y="1184.0" font-family="Liberation Sans" font-weight="bold" font-size="17.5" fill="#4F5AD6" textLength="30" lengthAdjust="spacingAndGlyphs">RDS</text>
<rect x="36" y="1250" width="75.7" height="75.2" rx="10" fill="none" stroke="#4F5AD6" stroke-width="2.8"/>
<text x="43" y="1272" font-family="Liberation Sans" font-weight="bold" font-size="19" fill="#4F5AD6" textLength="62" lengthAdjust="spacingAndGlyphs">MariaDB</text>
<rect x="144.1" y="1250" width="75.7" height="75.2" rx="10" fill="none" stroke="#4F5AD6" stroke-width="2.8"/>
<text x="151.1" y="1272" font-family="Liberation Sans" font-weight="bold" font-size="19" fill="#4F5AD6" textLength="62" lengthAdjust="spacingAndGlyphs">MariaDB</text>
<rect x="252" y="1250" width="75.7" height="75.2" rx="10" fill="none" stroke="#4F5AD6" stroke-width="2.8"/>
<text x="264" y="1272" font-family="Liberation Sans" font-weight="bold" font-size="19" fill="#4F5AD6" textLength="55" lengthAdjust="spacingAndGlyphs">MySQL</text>
</svg></div>
</div>
 <div id="footer">
  <div class="abs" style="left:50px;top:27.5px;font-size:27px;line-height:27px;color:#fff;white-space:nowrap">More Shapes</div>
  <svg class="abs" style="left:0;top:-1272px" width="418" height="1352" viewBox="0 0 418 1352">
   <path d="M278,1313.8 H320 M299,1293.5 V1308 M292,1301 L299,1308 L306,1301 M299,1335 V1320 M292,1327 L299,1320 L306,1327 M376,1296 L359,1313 L376,1330.5" fill="none" stroke="#fff" stroke-width="2"/>
  </svg>
 </div>

<!--TITLEBAR-->
<div id="titlebar">
 <div class="abs" style="left:8px;top:37px;width:12px;height:12px;border-radius:50%;background:#1A6FE3"></div>
 <div class="abs" style="left:26px;top:25.5px;font-size:34.5px;line-height:34.5px;color:#3C3C40;letter-spacing:-0.9px;-webkit-text-stroke:1.1px #FDFDFE;white-space:nowrap">AWS Diagram</div>
 <div class="abs" style="left:2104px;top:24px;width:322px;height:35px;border:2px solid #EDEDF0;border-radius:5px;background:#fff"></div>
 <div class="abs" style="left:2113.5px;top:33px;font-size:23.3px;line-height:23.3px;font-weight:bold;color:#8B8B90;letter-spacing:0.6px;white-space:nowrap">UNPUBLISHED CHANGES</div>
</div>
<!--CANVAS-->
<div id="canvas">
 <div class="abs" style="left:0;bottom:0;width:2456px;height:45px;background:linear-gradient(to bottom,rgba(230,230,235,0),rgba(225,225,232,0.6))"></div>
<svg class="abs" style="left:-418px;top:-247px" width="2874" height="1352" viewBox="0 0 2874 1352" font-family="Liberation Sans">
<defs>
 <linearGradient id="awsg2" x1="0" y1="1" x2="1" y2="0">
  <stop offset="0" stop-color="#3129B8"/><stop offset="1" stop-color="#5A82F6"/>
 </linearGradient>
 <filter id="shadow" x="-30%" y="-30%" width="160%" height="160%"><feGaussianBlur stdDeviation="5"/></filter>
</defs>
<text x="562.5" y="298" font-size="36" fill="#AEAEB3" stroke="#AEAEB3" stroke-width="0.9" textLength="503" lengthAdjust="spacingAndGlyphs">AWS Web Application Diagram</text>
<path d="M499,320 H2030" stroke="#BDBDC2" stroke-width="2.2"/>
<rect x="662.3" y="432.5" width="1310.5" height="850.5" rx="10" fill="#fff" stroke="#737373" stroke-width="2.6" stroke-dasharray="2 2"/>
<rect x="797" y="487.3" width="1136.6" height="757.7" rx="10" fill="#fff" stroke="#646464" stroke-width="2.5"/>
<rect x="880.7" y="523" width="1010.3" height="329.5" rx="9" fill="none" stroke="#F6BA7E" stroke-width="2.3" stroke-dasharray="8.5 8.5"/>
<rect x="880.7" y="877" width="1010.3" height="331" rx="9" fill="none" stroke="#F6BA7E" stroke-width="2.3" stroke-dasharray="8.5 8.5"/>
<rect x="916.3" y="567.8" width="156.7" height="243.6" rx="9" fill="#fff" stroke="#646464" stroke-width="2.5"/>
<rect x="916.3" y="913.7" width="156.7" height="243.6" rx="9" fill="#fff" stroke="#646464" stroke-width="2.5"/>
<rect x="1111" y="565" width="756.5" height="244.6" rx="10" fill="#fff" stroke="#646464" stroke-width="2.5"/>
<rect x="1111" y="913.7" width="756.5" height="244.8" rx="10" fill="#fff" stroke="#646464" stroke-width="2.5"/>
<rect x="1138" y="590" width="127" height="529" rx="8" fill="none" stroke="#C0C8EE" stroke-width="2.2" stroke-dasharray="8 8"/>
<rect x="1324.8" y="591" width="127.5" height="528.5999999999999" rx="8" fill="none" stroke="#C0C8EE" stroke-width="2.2" stroke-dasharray="8 8"/>
<rect x="1518" y="587.3" width="127" height="528.7" rx="8" fill="none" stroke="#C0C8EE" stroke-width="2.2" stroke-dasharray="8 8"/>
<rect x="1724" y="587" width="127.5" height="529" rx="8" fill="none" stroke="#C0C8EE" stroke-width="2.2" stroke-dasharray="8 8"/>
<path d="M1124.8,555 V547.5 A9.25,9.25 0 0 1 1143.3,547.5 V555" fill="none" stroke="#1E4B97" stroke-width="5"/><rect x="1116.8" y="554" width="34.7" height="22.4" fill="#1E4B97"/>
<path d="M1124.7,903.5 V896.0 A9.25,9.25 0 0 1 1143.2,896.0 V903.5" fill="none" stroke="#1E4B97" stroke-width="5"/><rect x="1116.7" y="902.5" width="34.7" height="22.4" fill="#1E4B97"/>
<rect x="903" y="602.3" width="30.3" height="168.3" rx="12" fill="#F3AB63" stroke="#5A5A5A" stroke-width="2.2"/>
<text x="0" y="0" transform="translate(921.8,686.4) rotate(-90)" text-anchor="middle" font-size="12.2" font-weight="bold" fill="#111">Elastic IPs</text>
<rect x="903" y="950.8" width="30.3" height="168" rx="12" fill="#F3AB63" stroke="#5A5A5A" stroke-width="2.2"/>
<text x="0" y="0" transform="translate(921.8,1034.8) rotate(-90)" text-anchor="middle" font-size="12.2" font-weight="bold" fill="#111">Elastic IPs</text>
<path d="M977,625.6 V634.6 M977,694.6 V703.6 M958,644.6 H967 M1027,644.6 H1036 M987,625.6 V634.6 M987,694.6 V703.6 M958,654.6 H967 M1027,654.6 H1036 M997,625.6 V634.6 M997,694.6 V703.6 M958,664.6 H967 M1027,664.6 H1036 M1007,625.6 V634.6 M1007,694.6 V703.6 M958,674.6 H967 M1027,674.6 H1036 M1017,625.6 V634.6 M1017,694.6 V703.6 M958,684.6 H967 M1027,684.6 H1036 " stroke="#E6752F" stroke-width="2.8"/><rect x="968.8" y="636.4" width="56.4" height="56.4" fill="#fff" stroke="#E6752F" stroke-width="3.6"/>
<path d="M976.7,973.3 V982.3 M976.7,1042.3 V1051.3 M957.7,992.3 H966.7 M1026.7,992.3 H1035.7 M986.7,973.3 V982.3 M986.7,1042.3 V1051.3 M957.7,1002.3 H966.7 M1026.7,1002.3 H1035.7 M996.7,973.3 V982.3 M996.7,1042.3 V1051.3 M957.7,1012.3 H966.7 M1026.7,1012.3 H1035.7 M1006.7,973.3 V982.3 M1006.7,1042.3 V1051.3 M957.7,1022.3 H966.7 M1026.7,1022.3 H1035.7 M1016.7,973.3 V982.3 M1016.7,1042.3 V1051.3 M957.7,1032.3 H966.7 M1026.7,1032.3 H1035.7 " stroke="#E6752F" stroke-width="2.8"/><rect x="968.5" y="984.0999999999999" width="56.4" height="56.4" fill="#fff" stroke="#E6752F" stroke-width="3.6"/>
<path d="M1186,623.6 V632.6 M1186,692.6 V701.6 M1167,642.6 H1176 M1236,642.6 H1245 M1196,623.6 V632.6 M1196,692.6 V701.6 M1167,652.6 H1176 M1236,652.6 H1245 M1206,623.6 V632.6 M1206,692.6 V701.6 M1167,662.6 H1176 M1236,662.6 H1245 M1216,623.6 V632.6 M1216,692.6 V701.6 M1167,672.6 H1176 M1236,672.6 H1245 M1226,623.6 V632.6 M1226,692.6 V701.6 M1167,682.6 H1176 M1236,682.6 H1245 " stroke="#E6752F" stroke-width="2.8"/><rect x="1177.8" y="634.4" width="56.4" height="56.4" fill="#fff" stroke="#E6752F" stroke-width="3.6"/>
<path d="M1180.8,972 V981 M1180.8,1041 V1050 M1161.8,991 H1170.8 M1230.8,991 H1239.8 M1190.8,972 V981 M1190.8,1041 V1050 M1161.8,1001 H1170.8 M1230.8,1001 H1239.8 M1200.8,972 V981 M1200.8,1041 V1050 M1161.8,1011 H1170.8 M1230.8,1011 H1239.8 M1210.8,972 V981 M1210.8,1041 V1050 M1161.8,1021 H1170.8 M1230.8,1021 H1239.8 M1220.8,972 V981 M1220.8,1041 V1050 M1161.8,1031 H1170.8 M1230.8,1031 H1239.8 " stroke="#E6752F" stroke-width="2.8"/><rect x="1172.6" y="982.8" width="56.4" height="56.4" fill="#fff" stroke="#E6752F" stroke-width="3.6"/>
<path d="M1367,623.6 V632.6 M1367,692.6 V701.6 M1348,642.6 H1357 M1417,642.6 H1426 M1377,623.6 V632.6 M1377,692.6 V701.6 M1348,652.6 H1357 M1417,652.6 H1426 M1387,623.6 V632.6 M1387,692.6 V701.6 M1348,662.6 H1357 M1417,662.6 H1426 M1397,623.6 V632.6 M1397,692.6 V701.6 M1348,672.6 H1357 M1417,672.6 H1426 M1407,623.6 V632.6 M1407,692.6 V701.6 M1348,682.6 H1357 M1417,682.6 H1426 " stroke="#E6752F" stroke-width="2.8"/><rect x="1358.8" y="634.4" width="56.4" height="56.4" fill="#fff" stroke="#E6752F" stroke-width="3.6"/>
<path d="M1366.3,974.5 V983.5 M1366.3,1043.5 V1052.5 M1347.3,993.5 H1356.3 M1416.3,993.5 H1425.3 M1376.3,974.5 V983.5 M1376.3,1043.5 V1052.5 M1347.3,1003.5 H1356.3 M1416.3,1003.5 H1425.3 M1386.3,974.5 V983.5 M1386.3,1043.5 V1052.5 M1347.3,1013.5 H1356.3 M1416.3,1013.5 H1425.3 M1396.3,974.5 V983.5 M1396.3,1043.5 V1052.5 M1347.3,1023.5 H1356.3 M1416.3,1023.5 H1425.3 M1406.3,974.5 V983.5 M1406.3,1043.5 V1052.5 M1347.3,1033.5 H1356.3 M1416.3,1033.5 H1425.3 " stroke="#E6752F" stroke-width="2.8"/><rect x="1358.1" y="985.3" width="56.4" height="56.4" fill="#fff" stroke="#E6752F" stroke-width="3.6"/>
<path d="M1590.5,704.1 H1550 Q1538,704.1 1538,692.1 V626.6 Q1538,614.6 1550,614.6 H1615 Q1627,614.6 1627,626.6 V652.1" fill="none" stroke="#3F48CC" stroke-width="3.8"/><text x="1582" y="639.1" text-anchor="middle" font-size="16" font-weight="bold" fill="#5A62D2" stroke="#5A62D2" stroke-width="0.5" textLength="77" lengthAdjust="spacingAndGlyphs">SQL Server</text><path d="M1588,658.6 V702.6" stroke="#E2E2E8" stroke-width="2.5"/><path d="M1592.3,658.9 V696.4 A17.4,7.0 0 0 0 1627.1,696.4 V658.9" fill="#fff" stroke="#3F48CC" stroke-width="3.6"/>
<ellipse cx="1609.7" cy="658.9" rx="17.4" ry="7.0" fill="#fff" stroke="#3F48CC" stroke-width="3.6"/>
<path d="M1592.3,671.4 A17.4,7.0 0 0 0 1627.1,671.4 M1592.3,683.9 A17.4,7.0 0 0 0 1627.1,683.9 " fill="none" stroke="#3F48CC" stroke-width="3.6"/>
<path d="M1590.5,1052.0 H1550 Q1538,1052.0 1538,1040.0 V974.5 Q1538,962.5 1550,962.5 H1615 Q1627,962.5 1627,974.5 V1000.0" fill="none" stroke="#3F48CC" stroke-width="3.8"/><text x="1582" y="987.0" text-anchor="middle" font-size="16" font-weight="bold" fill="#5A62D2" stroke="#5A62D2" stroke-width="0.5" textLength="77" lengthAdjust="spacingAndGlyphs">SQL Server</text><path d="M1588,1006.5 V1050.5" stroke="#E2E2E8" stroke-width="2.5"/><path d="M1592.3,1006.8 V1044.3 A17.4,7.0 0 0 0 1627.1,1044.3 V1006.8" fill="#fff" stroke="#3F48CC" stroke-width="3.6"/>
<ellipse cx="1609.7" cy="1006.8" rx="17.4" ry="7.0" fill="#fff" stroke="#3F48CC" stroke-width="3.6"/>
<path d="M1592.3,1019.3 A17.4,7.0 0 0 0 1627.1,1019.3 M1592.3,1031.8 A17.4,7.0 0 0 0 1627.1,1031.8 " fill="none" stroke="#3F48CC" stroke-width="3.6"/>
<rect x="1745.2" y="625.7" width="85" height="85" fill="url(#awsg2)"/><text x="1787.7" y="641.2" text-anchor="middle" font-size="11.5" font-weight="bold" fill="#111" textLength="68" lengthAdjust="spacingAndGlyphs">DG/DC/DNS</text><path d="M1774.2,651.0 V683.4 A14.5,5.8 0 0 0 1803.2,683.4 V651.0" fill="none" stroke="#fff" stroke-width="2"/>
<ellipse cx="1788.7" cy="651.0" rx="14.5" ry="5.8" fill="none" stroke="#fff" stroke-width="2"/>
<path d="M1774.2,661.8 A14.5,5.8 0 0 0 1803.2,661.8 M1774.2,672.6 A14.5,5.8 0 0 0 1803.2,672.6 " fill="none" stroke="#fff" stroke-width="2"/>
<rect x="1745.3" y="965" width="85" height="85" fill="url(#awsg2)"/><text x="1787.8" y="980.5" text-anchor="middle" font-size="11.5" font-weight="bold" fill="#111" textLength="68" lengthAdjust="spacingAndGlyphs">DG/DC/DNS</text><path d="M1774.3,990.3 V1022.7 A14.5,5.8 0 0 0 1803.3,1022.7 V990.3" fill="none" stroke="#fff" stroke-width="2"/>
<ellipse cx="1788.8" cy="990.3" rx="14.5" ry="5.8" fill="none" stroke="#fff" stroke-width="2"/>
<path d="M1774.3,1001.1 A14.5,5.8 0 0 0 1803.3,1001.1 M1774.3,1011.9 A14.5,5.8 0 0 0 1803.3,1011.9 " fill="none" stroke="#fff" stroke-width="2"/>
<rect x="689.7" y="394.7" width="87.5" height="74.5" fill="#232F3E"/>
<path d="M712.1,450.3 H755.1 A8.9,8.9 0 0 0 756.9,432.9 A8.5,8.5 0 0 0 742.2,425.1 A15.6,15.6 0 0 0 711.1,432.5 A9.4,9.4 0 0 0 712.1,450.3 Z" fill="none" stroke="#fff" stroke-width="2" stroke-linejoin="round"/>
<text x="733" y="437.5" text-anchor="middle" font-size="10" fill="#E8E8EA" textLength="21" lengthAdjust="spacingAndGlyphs">aws</text>
<path d="M724,440.5 Q733,444 742,440.5 M739.5,439.5 L742.5,440.5 L741,443" fill="none" stroke="#E8E8EA" stroke-width="1.1"/>
<rect x="761" y="503.2" width="72.6" height="72.5" fill="#258A17"/>
<path d="M778.5,558.0 H816.4 A8.4,8.4 0 0 0 818.0,540.7 A7.9,7.9 0 0 0 805.1,532.9 A14.6,14.6 0 0 0 777.7,540.3 A8.8,8.8 0 0 0 778.5,558.0 Z" fill="none" stroke="#fff" stroke-width="2" stroke-linejoin="round"/>
<path d="M791.5,541.5 V538.5 A4.4,4.4 0 0 1 800.3,538.5 V541.5" fill="none" stroke="#fff" stroke-width="2"/><rect x="789.2" y="541.3" width="13.4" height="9.4" fill="none" stroke="#fff" stroke-width="2"/>
<path d="M487,872 A16.8,19.5 0 0 1 520.6,872 Z" fill="#fff" stroke="#2E2E2E" stroke-width="3"/>
<path d="M520.2,872 A16.8,19.5 0 0 1 553.8,872 Z" fill="#fff" stroke="#2E2E2E" stroke-width="3"/>
<circle cx="503.8" cy="845.8" r="7.4" fill="#fff" stroke="#2E2E2E" stroke-width="3"/><circle cx="536.8" cy="845.8" r="7.4" fill="#fff" stroke="#2E2E2E" stroke-width="3"/>
<path d="M497,903.5 A23.9,24.8 0 0 1 544.8,903.5 Z" fill="#fff" stroke="#2E2E2E" stroke-width="3.1" stroke-linejoin="round"/>
<circle cx="520.9" cy="867.6" r="10.4" fill="#fff" stroke="#2E2E2E" stroke-width="3.1"/>
<path d="M640.2,887.5 H685.8 A9.7,9.7 0 0 0 687.7,868.0 A9.2,9.2 0 0 0 672.2,859.2 A17.0,17.0 0 0 0 639.2,867.5 A10.2,10.2 0 0 0 640.2,887.5 Z" fill="#fff" stroke="#2E2E2E" stroke-width="3.2" stroke-linejoin="round"/>
<path d="M645,870 Q661,857 677,870 M649.5,875 Q661,865 672.5,875 M654.5,879.5 Q661.5,872 668.5,879.5" fill="none" stroke="#2E2E2E" stroke-width="3"/>
<ellipse cx="797.5" cy="871.5" rx="30.3" ry="32" fill="#F58536"/>
<rect x="773" y="862.7" width="11.5" height="16" fill="#fff"/>
<path d="M784.5,870.7 L806,855 M784.5,870.7 H806 M784.5,870.7 L806,886" stroke="#fff" stroke-width="2.2"/>
<rect x="805.7" y="851" width="11.3" height="8.5" fill="#fff"/><rect x="805.7" y="866.5" width="11.3" height="8.5" fill="#fff"/><rect x="805.7" y="882" width="11.3" height="8.5" fill="#fff"/>
<rect x="627" y="889.5" width="33.5" height="55" fill="#fff"/><rect x="627" y="904" width="68" height="40.5" fill="#fff"/>
<rect x="760" y="904" width="75" height="38" fill="#fff"/>
<text x="519.5" y="921.4" text-anchor="middle" font-size="12.2" fill="#111" font-weight="bold" >Users</text>
<text x="662" y="919.8" text-anchor="middle" font-size="12.2" fill="#111" font-weight="bold" >Internet</text>
<text x="662" y="934.9" text-anchor="middle" font-size="12.2" fill="#111" font-weight="bold" >Gateweay</text>
<text x="797.5" y="921.4" text-anchor="middle" font-size="12.2" fill="#111" font-weight="bold" >Elastic Load</text>
<text x="797.5" y="936.6" text-anchor="middle" font-size="12.2" fill="#111" font-weight="bold" >Balancer</text>
<text x="999" y="595.9" text-anchor="middle" font-size="12.2" fill="#F29B30" font-weight="bold" >Public Subnet</text>
<text x="998" y="660.6" text-anchor="middle" font-size="13.2" fill="#111" font-weight="bold" >Reverse</text>
<text x="998" y="676.2" text-anchor="middle" font-size="13.2" fill="#111" font-weight="bold" >Proxy</text>
<text x="998" y="736.0" text-anchor="middle" font-size="12.2" fill="#111" font-weight="bold" >Perimeter</text>
<text x="998" y="751.1" text-anchor="middle" font-size="12.2" fill="#111" font-weight="bold" >Security</text>
<text x="991.4" y="791.7" text-anchor="middle" font-size="12.2" fill="#111" font-weight="bold" >10.0.0.0/24</text>
<text x="991.4" y="805.9" text-anchor="middle" font-size="12.2" fill="#111" font-weight="bold" >DMZ</text>
<text x="999" y="943.4" text-anchor="middle" font-size="12.2" fill="#F29B30" font-weight="bold" >Public Subnet</text>
<text x="998" y="1008.1" text-anchor="middle" font-size="13.2" fill="#111" font-weight="bold" >Reverse</text>
<text x="998" y="1023.7" text-anchor="middle" font-size="13.2" fill="#111" font-weight="bold" >Proxy</text>
<text x="998" y="1083.5" text-anchor="middle" font-size="12.2" fill="#111" font-weight="bold" >Perimeter</text>
<text x="998" y="1098.6" text-anchor="middle" font-size="12.2" fill="#111" font-weight="bold" >Security</text>
<text x="991.4" y="1139.2" text-anchor="middle" font-size="12.2" fill="#111" font-weight="bold" >10.0.0.0/24</text>
<text x="991.4" y="1153.4" text-anchor="middle" font-size="12.2" fill="#111" font-weight="bold" >DMZ</text>
<text x="1205" y="606.8" text-anchor="middle" font-size="12.2" fill="#111" font-weight="bold" >Front-End</text>
<text x="1205" y="957.0" text-anchor="middle" font-size="12.2" fill="#111" font-weight="bold" >Front-End</text>
<text x="1206" y="655.8" text-anchor="middle" font-size="13.2" fill="#111" font-weight="bold" >Front-</text>
<text x="1206" y="671.8" text-anchor="middle" font-size="13.2" fill="#111" font-weight="bold" >End</text>
<text x="1201" y="1007.1" text-anchor="middle" font-size="13.2" fill="#111" font-weight="bold" >Front-</text>
<text x="1201" y="1022.8" text-anchor="middle" font-size="13.2" fill="#111" font-weight="bold" >End</text>
<text x="1386.4" y="606.8" text-anchor="middle" font-size="12.2" fill="#111" font-weight="bold" >Back-End</text>
<text x="1386.4" y="955.2" text-anchor="middle" font-size="12.2" fill="#111" font-weight="bold" >Back-End</text>
<text x="1387" y="655.8" text-anchor="middle" font-size="13.2" fill="#111" font-weight="bold" >Batch-</text>
<text x="1387" y="671.8" text-anchor="middle" font-size="13.2" fill="#111" font-weight="bold" >Processing</text>
<text x="1386" y="1007.1" text-anchor="middle" font-size="13.2" fill="#111" font-weight="bold" >Batch-</text>
<text x="1386" y="1022.8" text-anchor="middle" font-size="13.2" fill="#111" font-weight="bold" >Processing</text>
<text x="1581.6" y="607.2" text-anchor="middle" font-size="12.2" fill="#111" font-weight="bold" >Database</text>
<text x="1581.4" y="955.2" text-anchor="middle" font-size="12.2" fill="#111" font-weight="bold" >Database</text>
<text x="1577.6" y="718.8" text-anchor="middle" font-size="12.2" fill="#111" font-weight="bold" >SQL Server Instance</text>
<text x="1577.8" y="1067.0" text-anchor="middle" font-size="12.2" fill="#111" font-weight="bold" >SQL Server Instance</text>
<text x="1787.8" y="607.2" text-anchor="middle" font-size="12.2" fill="#111" font-weight="bold" >Active Directory</text>
<text x="1787.3" y="955.2" text-anchor="middle" font-size="12.2" fill="#111" font-weight="bold" >Active Directory</text>
<text x="1786" y="724.2" text-anchor="middle" font-size="12.2" fill="#111" font-weight="bold" >Domain Controller</text>
<text x="1785.8" y="1063.0" text-anchor="middle" font-size="12.2" fill="#111" font-weight="bold" >Domain Controller</text>
<text x="1480.7" y="776.9" text-anchor="middle" font-size="12.2" fill="#111" font-weight="bold" >Private Subnet</text>
<text x="1480.7" y="791.7" text-anchor="middle" font-size="12.2" fill="#111" font-weight="bold" >10.0.2.0/24</text>
<text x="1480.5" y="1131.3" text-anchor="middle" font-size="12.2" fill="#111" font-weight="bold" >Private Subnet</text>
<text x="1480.5" y="1145.8" text-anchor="middle" font-size="12.2" fill="#111" font-weight="bold" >10.0.3.0/24</text>
<text x="1394" y="837.2" text-anchor="middle" font-size="13" fill="#F2A55C" font-weight="bold" >Availability Zone 1</text>
<text x="1427" y="1194.0" text-anchor="middle" font-size="13" fill="#F2A55C" font-weight="bold" >Availability Zone 2</text>
<text x="1384.6" y="1235.8" text-anchor="middle" font-size="13.2" fill="#111" font-weight="bold" >VPC - 10.0.0/16</text>
<circle cx="2734" cy="1213.5" r="37" fill="#F5C9CE" opacity="0.55"/>
<circle cx="2792" cy="1251" r="56" fill="#000" opacity="0.18" filter="url(#shadow)"/>
<circle cx="2790" cy="1248" r="56" fill="#2388F0"/>
<circle cx="2736" cy="1214" r="25.5" fill="#E52F31"/>
<text x="2736" y="1224" text-anchor="middle" font-size="28" fill="#fff" stroke="#fff" stroke-width="0.8">1</text>
<path d="M2781,1270 V1263 Q2772,1255 2772,1242.5 A17,17 0 0 1 2806,1242.5 Q2806,1255 2797,1263 V1270 Q2797,1276.5 2789,1276.5 Q2781,1276.5 2781,1270 Z M2782,1267 H2796" fill="none" stroke="#fff" stroke-width="6" stroke-linejoin="round"/>
<circle cx="2789" cy="1215.4" r="3.6" fill="#fff"/>
<circle cx="2768.2" cy="1225.8" r="3.6" fill="#fff"/>
<circle cx="2809.8" cy="1225.8" r="3.6" fill="#fff"/>
<circle cx="2761.3" cy="1246.6" r="3.6" fill="#fff"/>
<circle cx="2816.6" cy="1246.6" r="3.6" fill="#fff"/>
</svg>
</div>
<svg class="abs" style="left:0;top:0" width="2874" height="1352" viewBox="0 0 2874 1352"><path d="M0,1342 A14,10 0 0 0 14,1352 H0 Z M2874,1342 A14,10 0 0 1 2860,1352 H2874 Z" fill="#141414"/></svg>
</body></html>
